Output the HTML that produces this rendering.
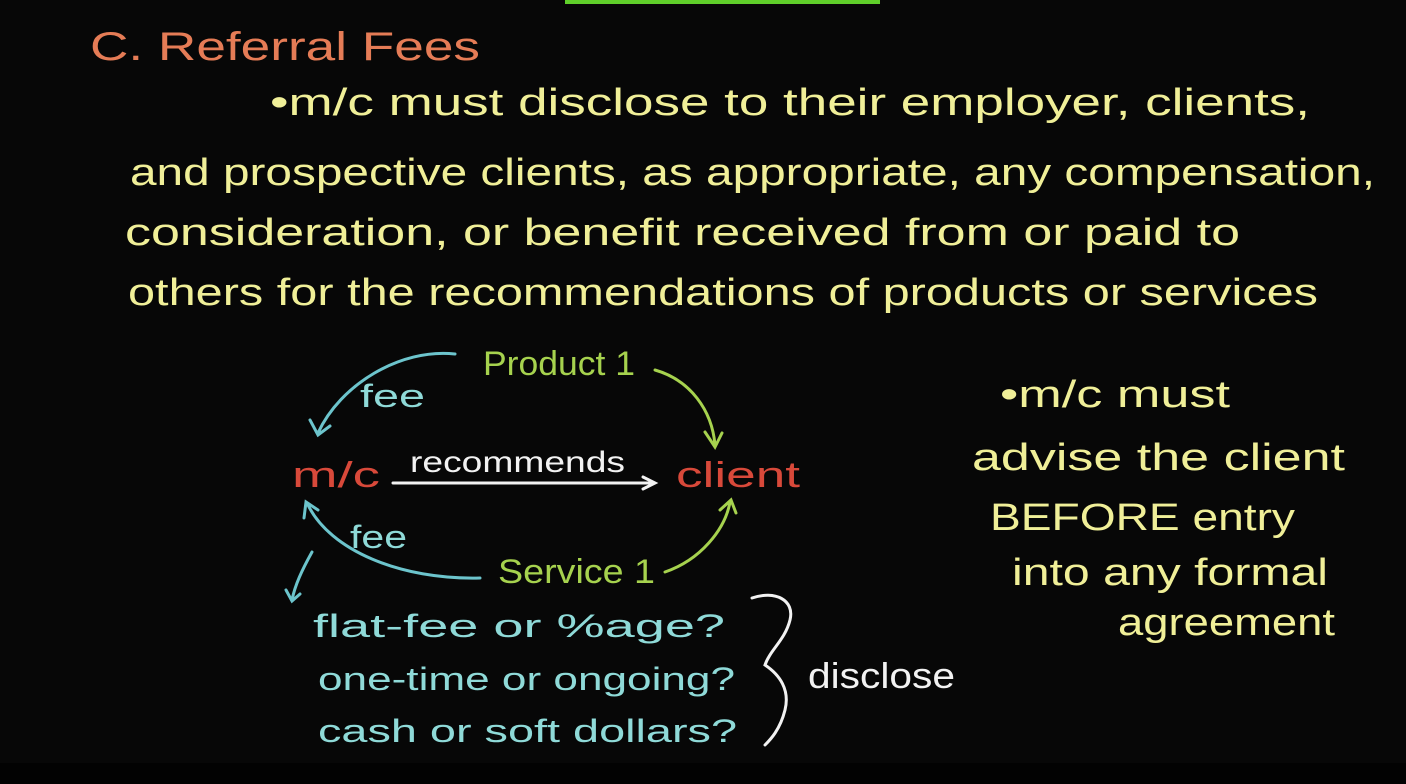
<!DOCTYPE html>
<html><head><meta charset="utf-8"><style>
html,body{margin:0;padding:0;background:#070707;}
svg{display:block}
text{font-family:"Liberation Sans",sans-serif;}
</style></head><body>
<svg width="1406" height="784" viewBox="0 0 1406 784" xmlns="http://www.w3.org/2000/svg">
<rect width="1406" height="784" fill="#070707"/>
<rect y="763" width="1406" height="21" fill="#020202"/>
<rect x="565" y="0" width="315" height="4" fill="#5fcf2a"/>
<g fill="#e57c56" font-size="40"><text x="90" y="60" textLength="390" lengthAdjust="spacingAndGlyphs">C. Referral Fees</text></g>
<g fill="#f0ef98" font-size="38">
<text x="270" y="115" textLength="1040" lengthAdjust="spacingAndGlyphs">•m/c must disclose to their employer, clients,</text>
<text x="130" y="185" textLength="1245" lengthAdjust="spacingAndGlyphs">and prospective clients, as appropriate, any compensation,</text>
<text x="125" y="245" textLength="1115" lengthAdjust="spacingAndGlyphs">consideration, or benefit received from or paid to</text>
<text x="128" y="305" textLength="1190" lengthAdjust="spacingAndGlyphs">others for the recommendations of products or services</text>
<text x="1000" y="407" textLength="230" lengthAdjust="spacingAndGlyphs">•m/c must</text>
<text x="972" y="470" textLength="373" lengthAdjust="spacingAndGlyphs">advise the client</text>
<text x="990" y="530" textLength="305" lengthAdjust="spacingAndGlyphs">BEFORE entry</text>
<text x="1012" y="585" textLength="316" lengthAdjust="spacingAndGlyphs">into any formal</text>
<text x="1118" y="635" textLength="217" lengthAdjust="spacingAndGlyphs">agreement</text>
</g>
<g fill="#a6d24e" font-size="34">
<text x="483" y="375" textLength="152" lengthAdjust="spacingAndGlyphs">Product 1</text>
<text x="498" y="583" textLength="157" lengthAdjust="spacingAndGlyphs">Service 1</text>
</g>
<g fill="#d8493a" font-size="36">
<text x="292" y="487" textLength="88" lengthAdjust="spacingAndGlyphs">m/c</text>
<text x="676" y="487" textLength="124" lengthAdjust="spacingAndGlyphs">client</text>
</g>
<g fill="#f2f2f2" font-size="30">
<text x="410" y="472" textLength="215" lengthAdjust="spacingAndGlyphs">recommends</text>
<text x="808" y="688" textLength="147" lengthAdjust="spacingAndGlyphs" font-size="36">disclose</text>
</g>
<g fill="#8fdad8" font-size="32">
<text x="360" y="407" textLength="65" lengthAdjust="spacingAndGlyphs">fee</text>
<text x="350" y="548" textLength="57" lengthAdjust="spacingAndGlyphs">fee</text>
<text x="313" y="637" textLength="412" lengthAdjust="spacingAndGlyphs">flat-fee or %age?</text>
<text x="318" y="690" textLength="417" lengthAdjust="spacingAndGlyphs">one-time or ongoing?</text>
<text x="318" y="742" textLength="419" lengthAdjust="spacingAndGlyphs">cash or soft dollars?</text>
</g>
<g fill="none" stroke-width="3" stroke-linecap="round">
<path d="M393 483 L652 483 M643 477 L655 483 L643 489" stroke="#f2f2f2"/>
<path d="M455 354 C400 348 340 385 318 433 M310 420 L318 435 L330 426" stroke="#6cc4cc"/>
<path d="M655 370 C690 380 712 410 715 445 M705 432 L715 447 L722 433" stroke="#a6d24e"/>
<path d="M480 578 C400 580 330 550 308 505 M304 518 L306 502 L318 510" stroke="#6cc4cc"/>
<path d="M665 572 C700 560 725 530 730 502 M720 510 L731 500 L736 513" stroke="#a6d24e"/>
<path d="M312 552 C302 570 295 585 292 600 M286 590 L292 601 L300 594" stroke="#6cc4cc"/>
<path d="M752 598 C775 590 795 600 790 620 C785 640 770 650 765 665 C780 675 790 690 785 710 C780 730 770 740 765 745" stroke="#f2f2f2"/>
</g>
</svg>
</body></html>
